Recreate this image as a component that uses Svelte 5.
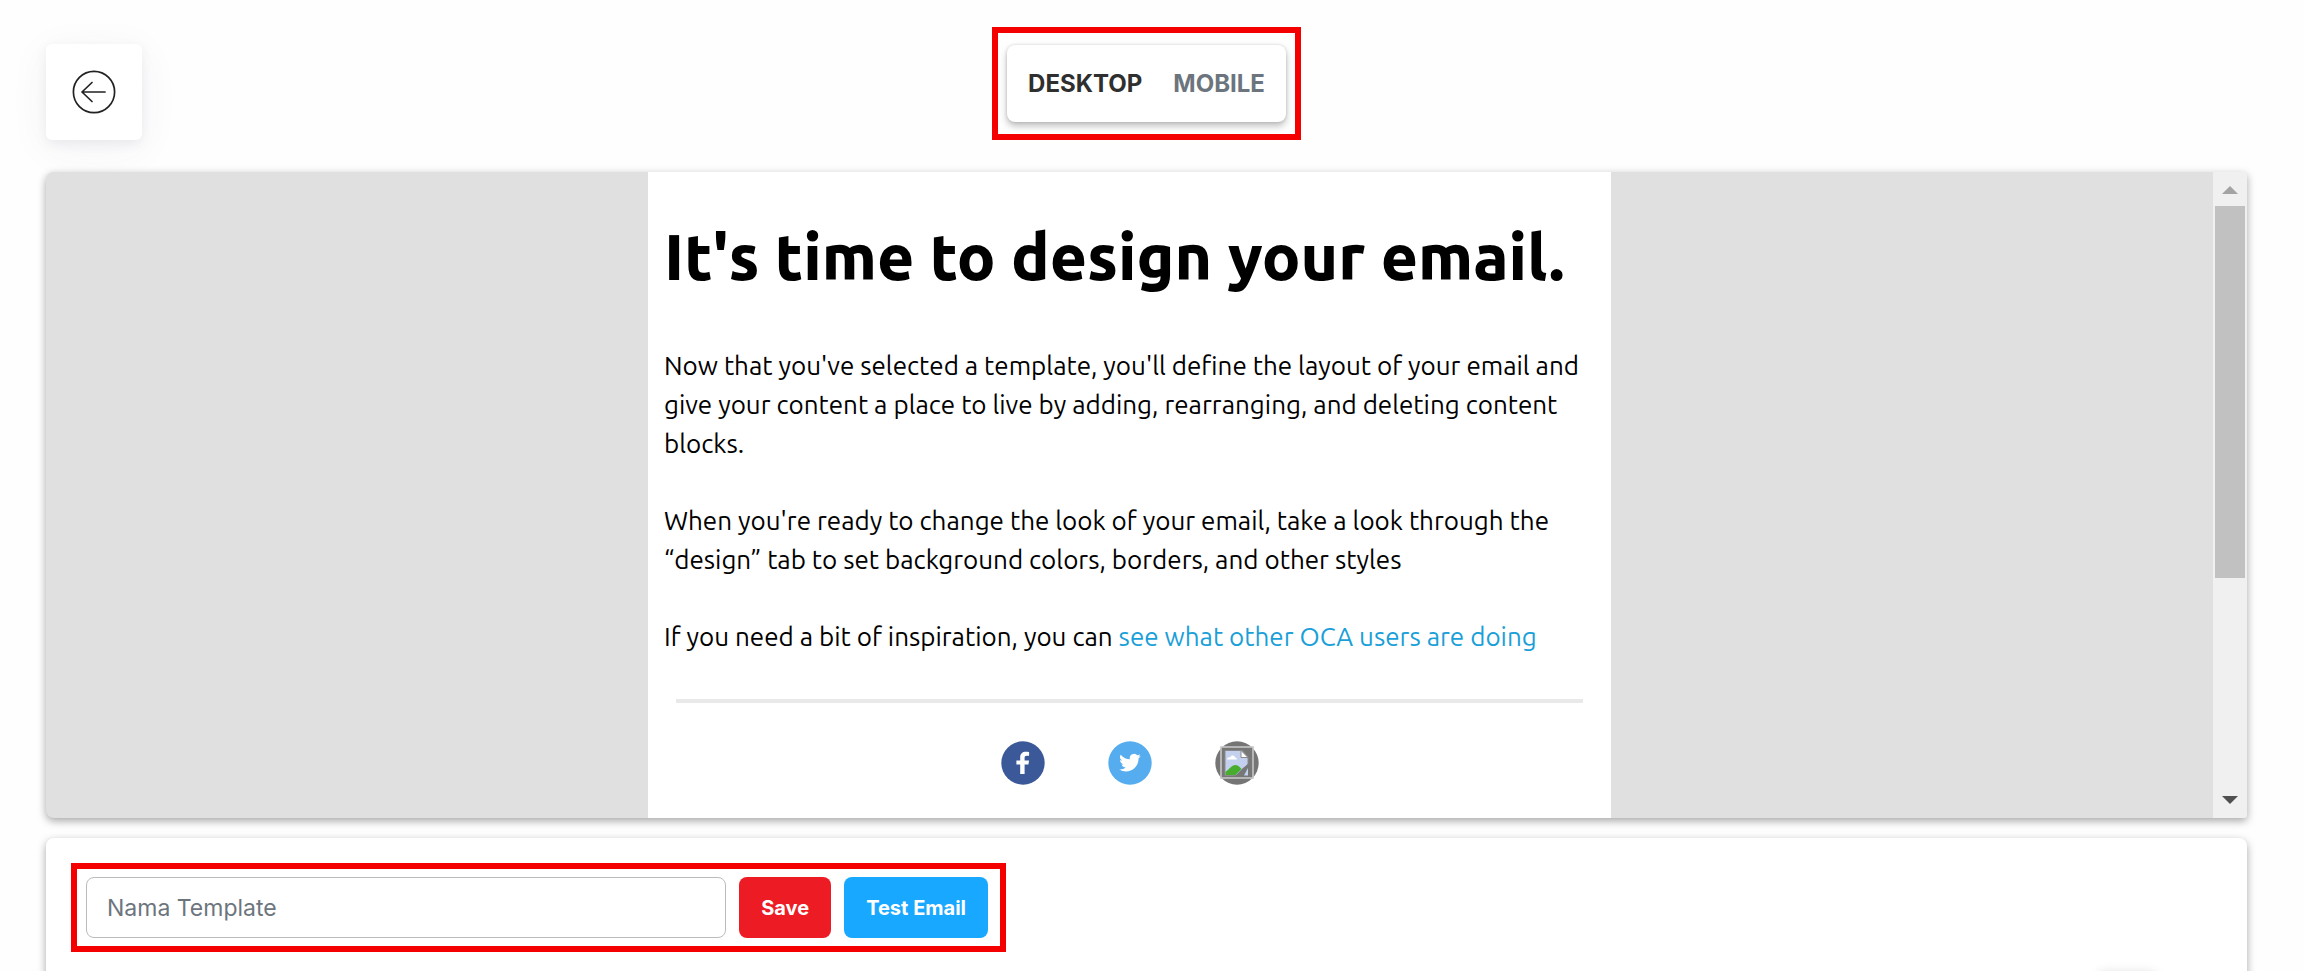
<script>
  let device = 'desktop';
  let templateName = '';

  const devices = [
    { id: 'desktop', name: 'DESKTOP' },
    { id: 'mobile', name: 'MOBILE' }
  ];
</script>

<div class="page">
  <header class="topbar">
    <button class="back" type="button" aria-label="Back">
      <svg viewBox="0 0 44 44" width="44" height="44" fill="none" stroke="#222" stroke-width="1.7">
        <circle cx="22" cy="22" r="20.6" />
        <path d="M33 22H10M20 12.5L10 22l10 9.5" stroke-linecap="round" stroke-linejoin="round" />
      </svg>
    </button>

    <div class="highlight devices-frame">
      <div class="devices">
        {#each devices as item}
          <button
            type="button"
            class="device"
            class:active={device === item.id}
            on:click={() => (device = item.id)}>{item.name}</button>
        {/each}
      </div>
    </div>
  </header>

  <main class="preview">
    <div class="canvas">
      <article class="email">
        <h1>It's time to design your email.</h1>
        <p>
          Now that you've selected a template, you'll define the layout of your email and
          give your content a place to live by adding, rearranging, and deleting content
          blocks.
        </p>
        <p>
          When you're ready to change the look of your email, take a look through the
          “design” tab to set background colors, borders, and other styles
        </p>
        <p>
          If you need a bit of inspiration, you can
          <a href="#inspiration">see what other OCA users are doing</a>
        </p>
        <hr />
        <div class="social">
          <a href="#facebook" aria-label="Facebook">
            <svg viewBox="0 0 44 44" width="44" height="44">
              <circle cx="22" cy="22" r="21.7" fill="#3b5998" />
              <path
                fill="#fff"
                d="M19.2 33V23.5h-3.8v-4h3.8v-3.2c0-3.8 2.3-5.6 5.5-5.6 1.6 0 2.9.1 3.4.2v3.8h-2.2c-1.9 0-2.3.9-2.3 2.2v2.6h4.5l-.7 4h-3.8V33z" />
            </svg>
          </a>
          <a href="#twitter" aria-label="Twitter">
            <svg viewBox="0 0 44 44" width="44" height="44">
              <circle cx="22" cy="22" r="21.7" fill="#55acee" />
              <path
                fill="#fff"
                transform="translate(11.2 10.8) scale(.9)"
                d="M23.95 4.57a10 10 0 0 1-2.82.77 4.96 4.96 0 0 0 2.16-2.72c-.95.55-2 .95-3.13 1.18a4.92 4.92 0 0 0-8.38 4.48C7.69 8.1 4.07 6.13 1.64 3.16a4.92 4.92 0 0 0 1.52 6.57 4.9 4.9 0 0 1-2.23-.61v.06c0 2.38 1.7 4.37 3.95 4.82a5 5 0 0 1-2.21.09 4.94 4.94 0 0 0 4.6 3.42A9.87 9.87 0 0 1 0 19.54a14 14 0 0 0 7.55 2.21c9.05 0 14-7.5 14-13.98 0-.21 0-.42-.02-.63a9.94 9.94 0 0 0 2.46-2.55z" />
            </svg>
          </a>
          <a href="#website" aria-label="Website">
            <svg viewBox="0 0 44 44" width="44" height="44">
              <circle cx="22" cy="22" r="21.7" fill="#757575" />
              <rect x="6" y="6" width="32" height="31" fill="#777" stroke="#c6c6c6" stroke-width="1.6" />
              <path d="M10 9.500H27L33 16V34.500H10z" fill="#c3d0ee" stroke="#8a8a8a" />
              <path d="M12 18.500c0-2 2-2.500 3-2 1-3 5-2.500 5 0 2 0 2 2 2 2z" fill="#fff" />
              <path d="M10.500 34v-3c4-3 6-7 10-7 3 0 5 3 6 4l-6 6z" fill="#46ad2e" />
              <path d="M20 35l8-8c3-2 4-4 6-5v13z" fill="#777" />
              <path d="M29 34.500H33V27z" fill="#c3d0ee" />
              <path d="M26 9.500V16.500H33z" fill="#fff" stroke="#8a8a8a" />
            </svg>
          </a>
        </div>
      </article>
    </div>
    <div class="scrollbar" aria-hidden="true">
      <svg class="arrow" viewBox="0 0 34 34" width="34" height="34"><path d="M9 22L17 14l8 8z" fill="#a3a3a3" /></svg>
      <div class="thumb"></div>
      <svg class="arrow down" viewBox="0 0 34 34" width="34" height="34"><path d="M9 12h16l-8 8z" fill="#505050" /></svg>
    </div>
  </main>

  <section class="actions">
    <form class="highlight form" on:submit|preventDefault>
      <input
        type="text"
        aria-label="Nama Template"
        placeholder="Nama Template"
        bind:value={templateName} />
      <button class="btn save" type="submit">Save</button>
      <button class="btn test" type="button">Test Email</button>
    </form>
  </section>

  <div class="floating"></div>
</div>

<style>
  :global(body) {
    background: #fefefe;
  }

  .page {
    box-sizing: border-box;
    display: flex;
    flex-direction: column;
    height: 100vh;
    padding: 27px 57px 0 46px;
    overflow: hidden;
    font-family: Inter, "Liberation Sans", sans-serif;
  }

  .page * {
    box-sizing: border-box;
  }

  .topbar {
    display: grid;
    grid-template-columns: 1fr auto 1fr;
    align-items: start;
    height: 145px;
    flex: none;
  }

  .back {
    display: flex;
    align-items: center;
    justify-content: center;
    width: 96px;
    height: 96px;
    margin-top: 17px;
    padding: 0;
    border: none;
    border-radius: 6px;
    background: #fff;
    box-shadow: 0 8px 40px rgba(60, 60, 100, 0.06), 0 4px 12px rgba(60, 60, 100, 0.08);
    cursor: pointer;
  }

  .highlight {
    border: 6px solid #f40000;
  }

  .devices-frame {
    padding: 12px 9px;
  }

  .devices {
    display: flex;
    align-items: center;
    gap: 31px;
    height: 77px;
    padding: 0 21px;
    border-radius: 8px;
    background: #fff;
    box-shadow: 0 4px 7px rgba(0, 0, 0, 0.25), 0 0 3px rgba(0, 0, 0, 0.15);
  }

  .device {
    padding: 0;
    border: none;
    background: none;
    color: #6c757d;
    font: 700 24px/30px Inter, "Liberation Sans", sans-serif;
    cursor: pointer;
  }

  .device.active {
    color: #2f2f2f;
  }

  .preview {
    display: flex;
    flex: none;
    height: 646px;
    border-radius: 8px 3px 3px 8px;
    background: #e0e0e0;
    box-shadow: 0 3px 8px rgba(0, 0, 0, 0.35);
    overflow: hidden;
  }

  .canvas {
    flex: 1;
    display: flex;
    justify-content: center;
  }

  .email {
    width: 963px;
    padding: 44px 16px 0;
    background: #fff;
    color: #000;
    font: 26px/39px Ubuntu, "Noto Sans", "Open Sans", sans-serif;
  }

  h1 {
    margin: 0 0 50px;
    font-size: 64px;
    font-weight: 800;
    line-height: 80px;
  }

  p {
    margin: 0 0 38px;
  }

  p a {
    color: #1b9fd8;
    text-decoration: none;
  }

  hr {
    height: 4px;
    margin: 43px 12px 38px;
    border: none;
    background: #e9e9e9;
  }

  .social {
    display: flex;
    justify-content: center;
    gap: 63px;
  }

  .social svg,
  .back svg,
  .arrow {
    display: block;
  }

  .scrollbar {
    display: flex;
    flex-direction: column;
    width: 34px;
    background: #f0f0f0;
  }

  .thumb {
    height: 372px;
    margin: 0 2px;
    background: #c1c1c1;
  }

  .down {
    margin-top: auto;
  }

  .actions {
    flex: 1;
    margin-top: 20px;
    padding: 25px;
    border-radius: 8px 8px 0 0;
    background: #fff;
    box-shadow: 0 3px 8px rgba(0, 0, 0, 0.35);
  }

  .form {
    display: flex;
    width: 935px;
    max-width: 100%;
    padding: 8px 12px 8px 9px;
    gap: 13px;
  }

  input {
    flex: 1;
    min-width: 0;
    height: 61px;
    padding: 0 20px;
    border: 1px solid #bbb;
    border-radius: 8px;
    background: #fff;
    font: 23px/30px Inter, "Liberation Sans", sans-serif;
  }

  input::placeholder {
    color: #6c757d;
    opacity: 1;
  }

  .btn {
    height: 61px;
    padding: 0 22px;
    border: none;
    border-radius: 8px;
    color: #fff;
    font: 700 20px/30px Inter, "Liberation Sans", sans-serif;
    cursor: pointer;
  }

  .save {
    background: #ed1c24;
  }

  .test {
    background: #18a8ff;
  }

  .floating {
    position: fixed;
    right: 147px;
    bottom: -62px;
    width: 60px;
    height: 60px;
    border-radius: 8px;
    box-shadow: 0 0 12px rgba(0, 0, 0, 0.15);
  }
</style>
